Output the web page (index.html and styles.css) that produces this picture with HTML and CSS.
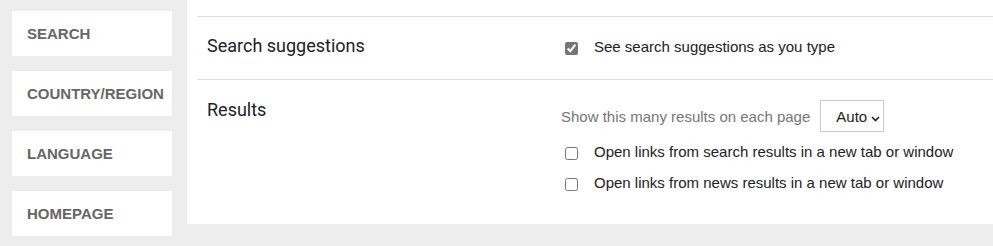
FILE: index.html
```html
<!DOCTYPE html>
<html lang="en">
<head>
    <meta charset="UTF-8">
    <meta name="viewport" content="width=device-width, initial-scale=1.0">
    <title>Search settings</title>
    <link rel="stylesheet" href="styles.css">
</head>
<body>

    <div class="page">
        <nav class="sidebar">
            <a class="nav-item" href="#">SEARCH</a>
            <a class="nav-item" href="#">COUNTRY/REGION</a>
            <a class="nav-item" href="#">LANGUAGE</a>
            <a class="nav-item" href="#">HOMEPAGE</a>
        </nav>

        <main class="panel">
            <div class="row row-first">
                <div class="row-title">Search suggestions</div>
                <div class="row-body">
                    <label class="option">
                        <input type="checkbox" checked>
                        <span>See search suggestions as you type</span>
                    </label>
                </div>
            </div>

            <div class="row row-results">
                <div class="row-title">Results</div>
                <div class="row-body">
                    <div class="count-line">
                        <span class="hint">Show this many results on each page</span>
                        <span class="select-wrap">
                            <select class="count-select">
                                <option>Auto</option>
                                <option>10</option>
                                <option>20</option>
                                <option>50</option>
                            </select>
                            <svg class="chevron" width="9" height="6" viewBox="0 0 9 6">
                                <path d="M1 1l3.5 3.5L8 1" fill="none" stroke="#222" stroke-width="1.6"/>
                            </svg>
                        </span>
                    </div>
                    <label class="option option-first">
                        <input type="checkbox">
                        <span>Open links from search results in a new tab or window</span>
                    </label>
                    <label class="option">
                        <input type="checkbox">
                        <span>Open links from news results in a new tab or window</span>
                    </label>
                </div>
            </div>
        </main>
    </div>

</body>
</html>
```

FILE: styles.css
```css
body { margin: 0; background: #ededed; font-family: "Liberation Sans", Arial, sans-serif; }
.page { display: flex; align-items: flex-start; }

.sidebar { display: flex; flex-direction: column; gap: 15px; width: 160px; padding: 11px 0 0 12px; }
.nav-item { display: block; height: 45px; line-height: 45px; padding-left: 15px; background: #fff; color: #666; font-size: 15px; font-weight: bold; text-decoration: none; }

.panel { flex: 1; margin-left: 15px; height: 224px; padding: 16px 0 0 10px; background: #fff; box-sizing: border-box; }

.row { display: flex; border-top: 1px solid #dedede; }
.row-first { height: 63px; padding-top: 19px; box-sizing: border-box; }
.row-results { padding-top: 20px; }
.row-title { width: 354px; padding-left: 10px; line-height: 20px; font-family: Roboto, "Liberation Sans", sans-serif; font-size: 18px; color: #202124; }
.row-body { flex: 1; }

.option { display: flex; align-items: center; height: 20px; font-size: 15px; color: #222; margin-top: 11px; }
.row-first .option { margin-top: 0; }
.option-first { margin-top: 9px; }
.option input { width: 13px; height: 13px; margin: 4px 16px 0 4px; accent-color: #767676; }

.count-line { display: flex; align-items: center; height: 32px; }
.hint { font-size: 15px; color: #767676; margin-right: 10px; }
.select-wrap { position: relative; display: inline-block; }
.count-select { appearance: none; -webkit-appearance: none; width: 64px; height: 32px; padding: 0 0 0 15px; border: 1px solid #c8c8c8; border-radius: 0; background: #fff; font-family: "Liberation Sans", Arial, sans-serif; font-size: 15px; color: #222; }
.chevron { position: absolute; left: 51px; top: 16px; pointer-events: none; }
```
